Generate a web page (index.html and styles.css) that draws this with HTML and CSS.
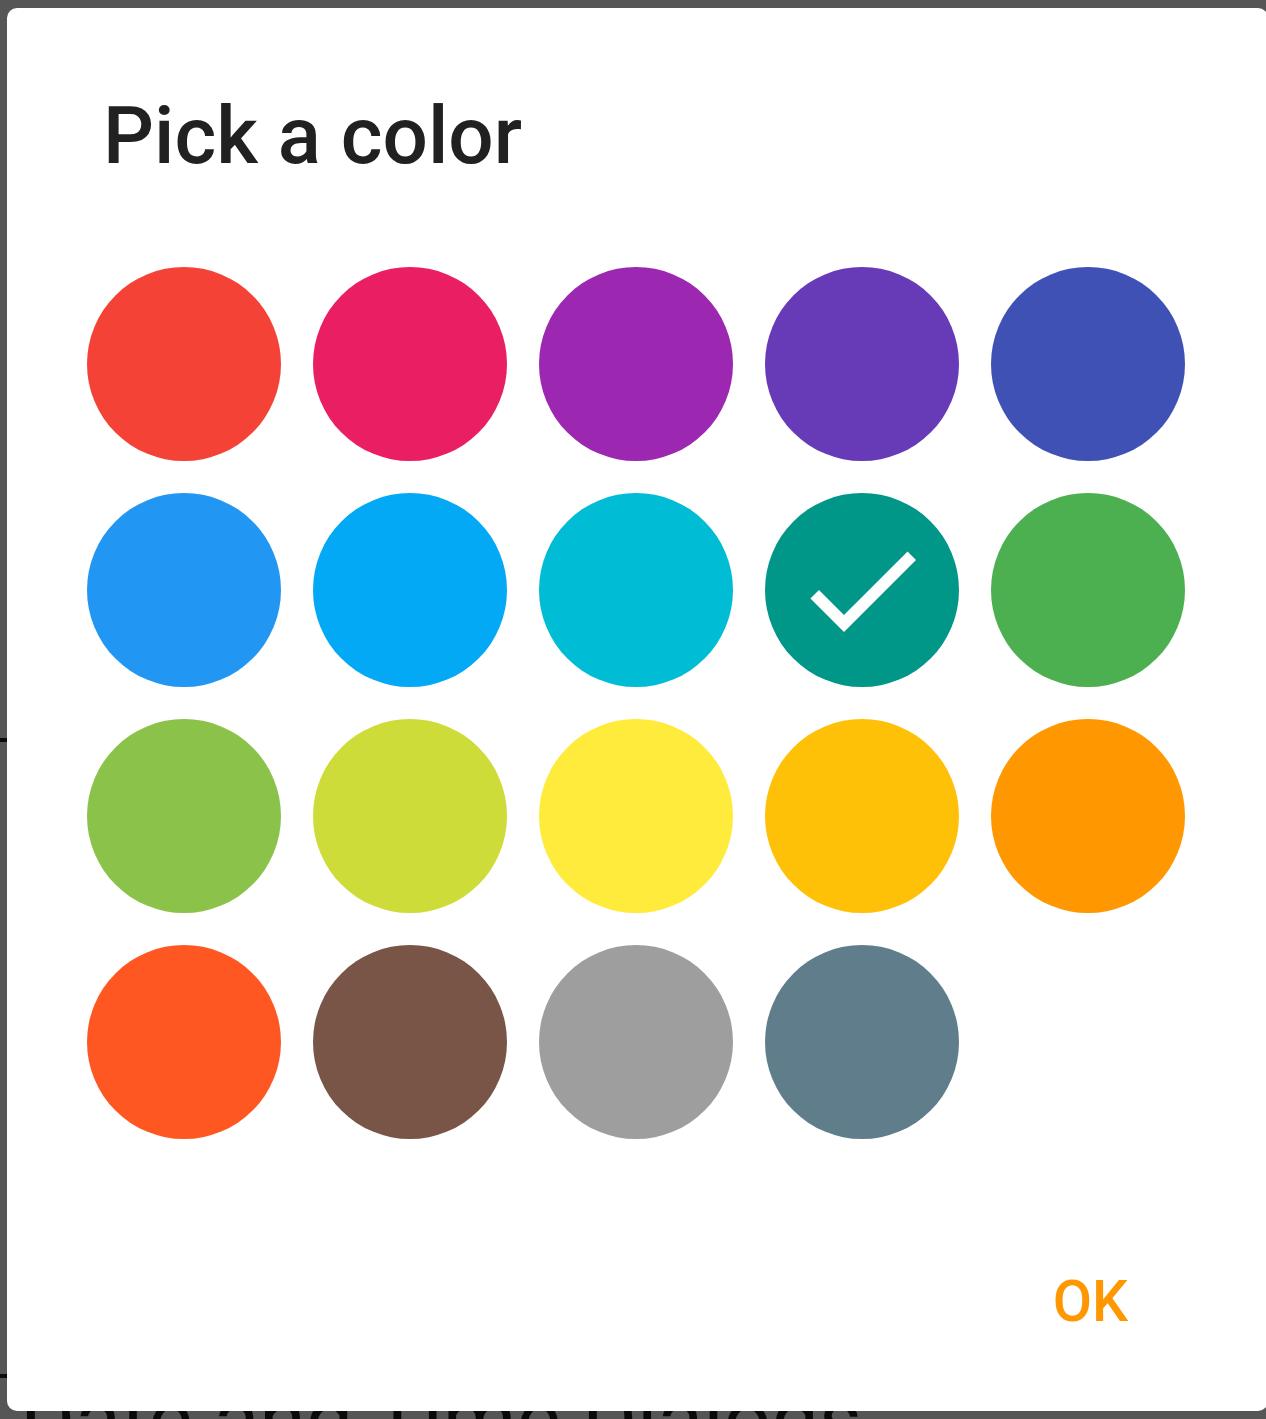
FILE: index.html
```html
<!DOCTYPE html>
<html>
<head>
<meta charset="utf-8">
<link rel="stylesheet" href="styles.css">
<title>Pick a color</title>
</head>
<body>
<div class="page">
  <div class="section section-a"></div>
  <div class="section section-b"></div>
  <h2 class="page-heading">Date and Time Dialogs</h2>
</div>
<div class="dialog">
  <h1 class="dialog-title">Pick a color</h1>
  <div class="swatches">
    <div class="swatch red"></div>
    <div class="swatch pink"></div>
    <div class="swatch purple"></div>
    <div class="swatch deep-purple"></div>
    <div class="swatch indigo"></div>
    <div class="swatch blue"></div>
    <div class="swatch light-blue"></div>
    <div class="swatch cyan"></div>
    <div class="swatch teal selected">
      <svg class="check" viewBox="0 0 24 24" width="144" height="144"><path fill="#fff" d="M9 16.17L4.83 12l-1.42 1.41L9 19 21 7l-1.41-1.41z"/></svg>
    </div>
    <div class="swatch green"></div>
    <div class="swatch light-green"></div>
    <div class="swatch lime"></div>
    <div class="swatch yellow"></div>
    <div class="swatch amber"></div>
    <div class="swatch orange"></div>
    <div class="swatch deep-orange"></div>
    <div class="swatch brown"></div>
    <div class="swatch grey"></div>
    <div class="swatch blue-grey"></div>
  </div>
  <div class="actions">
    <button class="ok">OK</button>
  </div>
</div>
</body>
</html>
```
FILE: styles.css
```css
html, body {
  margin: 0;
  padding: 0;
}
body {
  background: #565656;
  width: 1266px;
  height: 1419px;
  overflow: hidden;
  position: relative;
  font-family: Roboto, "Liberation Sans", sans-serif;
}
.page {
  display: flex;
  flex-direction: column;
}
.section {
  border-bottom: 4px solid #0c0c0c;
}
.section-a {
  height: 738px;
}
.section-b {
  height: 632px;
}
.page-heading {
  margin: 0;
  padding-left: 20px;
  font-weight: 400;
  font-size: 84px;
  line-height: 84px;
  color: #0a0a0a;
  white-space: nowrap;
}
.dialog {
  position: absolute;
  left: 7px;
  top: 8px;
  width: 1261px;
  height: 1403px;
  box-sizing: border-box;
  background: #fff;
  border-radius: 10px;
  padding: 88px 0 0 80px;
  display: flex;
  flex-direction: column;
}
.dialog-title {
  margin: 0 0 0 16px;
  font-size: 80px;
  line-height: 80px;
  font-weight: 500;
  color: #212121;
}
.swatches {
  margin-top: 91px;
  display: grid;
  grid-template-columns: repeat(5, 194px);
  grid-auto-rows: 194px;
  gap: 32px;
}
.swatch {
  border-radius: 50%;
  display: flex;
  align-items: center;
  justify-content: center;
}
.red { background: #F44336; }
.pink { background: #E91E63; }
.purple { background: #9C27B0; }
.deep-purple { background: #673AB7; }
.indigo { background: #3F51B5; }
.blue { background: #2196F3; }
.light-blue { background: #03A9F4; }
.cyan { background: #00BCD4; }
.teal { background: #009688; }
.green { background: #4CAF50; }
.light-green { background: #8BC34A; }
.lime { background: #CDDC39; }
.yellow { background: #FFEB3B; }
.amber { background: #FFC107; }
.orange { background: #FF9800; }
.deep-orange { background: #FF5722; }
.brown { background: #795548; }
.grey { background: #9E9E9E; }
.blue-grey { background: #607D8B; }
.check {
  display: block;
}
.actions {
  margin-top: 134px;
  display: flex;
  justify-content: flex-end;
  padding-right: 140px;
}
.ok {
  border: 0;
  background: none;
  padding: 0;
  font-family: Roboto, "Liberation Sans", sans-serif;
  font-weight: 500;
  font-size: 57px;
  line-height: 57px;
  color: #FF9800;
}
```
